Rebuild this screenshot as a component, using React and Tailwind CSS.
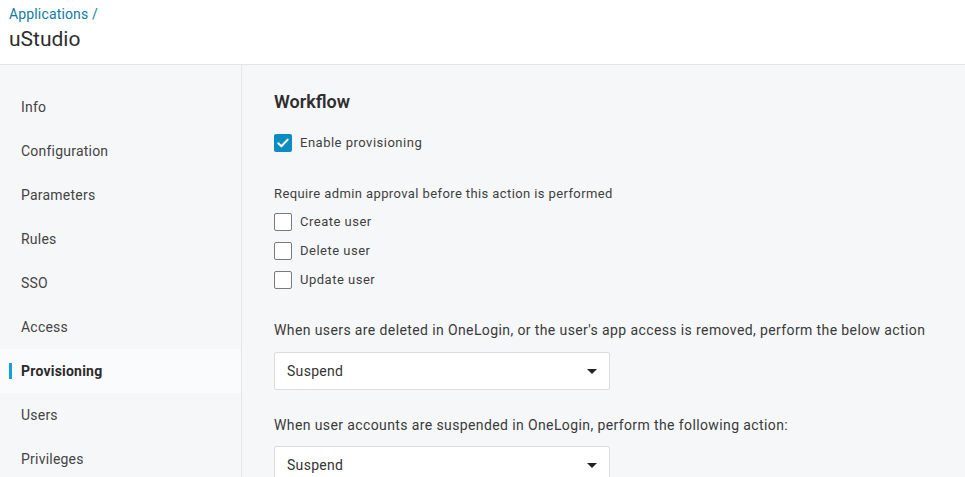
import React from "react";

const navItems = ["Info", "Configuration", "Parameters", "Rules", "SSO", "Access", "Provisioning", "Users", "Privileges"];

function Check({ checked, label }) {
  return (
    <label className="flex items-center gap-2 h-[18px]">
      {checked ? (
        <span className="w-[18px] h-[18px] rounded-[2px] bg-[#0c8dc2] flex items-center justify-center">
          <svg width="12" height="10" viewBox="0 0 12 10" fill="none">
            <path d="M1.3 5.2 L4.4 8.2 L10.7 1.6" stroke="white" strokeWidth="2" strokeLinecap="round" strokeLinejoin="round" />
          </svg>
        </span>
      ) : (
        <span className="w-[18px] h-[18px] rounded-[2px] border border-[#7a7a7a] bg-white" />
      )}
      <span className="text-[13px] tracking-[0.5px] text-[#3f3f3f]">{label}</span>
    </label>
  );
}

function Select({ value }) {
  return (
    <div className="w-[336px] h-[38px] bg-white border border-[#dcdcdc] rounded-[2px] flex items-center justify-between pl-[12px] pr-[12px]">
      <span className="text-[14px] tracking-[0.3px] text-[#333]">{value}</span>
      <svg width="10" height="5" viewBox="0 0 10 5">
        <path d="M0 0 L10 0 L5 5 Z" fill="#222" />
      </svg>
    </div>
  );
}

export default function App() {
  return (
    <div className="w-[965px] h-[477px] overflow-hidden bg-[#f6f7f9] flex flex-col" style={{ fontFamily: "Roboto, 'Liberation Sans', sans-serif" }}>
      <header className="h-[65px] shrink-0 bg-white border-b border-[#e3e4e6] pl-[9px] pt-[5px]">
        <div className="text-[14px] leading-[18px] tracking-[0.15px] text-[#0e7da3]">Applications /</div>
        <div className="text-[21px] leading-[30px] text-[#2e2e2e] mt-[1px]">uStudio</div>
      </header>
      <div className="flex flex-1 min-h-0">
        <nav className="w-[242px] shrink-0 border-r border-[#e6e7e9] pt-[20px] bg-[#f6f7f9]">
          {navItems.map((item) => {
            const active = item === "Provisioning";
            return (
              <div key={item} className={`relative h-[44px] flex items-center pl-[21px] text-[14px] tracking-[0.22px] ${active ? "bg-[#fafbfc] font-bold text-[#2b2b2b]" : "text-[#444]"}`}>
                {active && <span className="absolute left-[9px] top-[14px] w-[3px] h-[16px] bg-[#14a0d8]" />}
                {item}
              </div>
            );
          })}
        </nav>
        <main className="flex-1 pl-[32px] pt-[26px]">
          <h2 className="text-[18px] leading-[22px] font-semibold text-[#2e2e2e]">Workflow</h2>
          <div className="mt-[21px]">
            <Check checked label="Enable provisioning" />
          </div>
          <p className="mt-[34px] text-[13px] leading-[16px] tracking-[0.4px] text-[#3f3f3f]">Require admin approval before this action is performed</p>
          <div className="mt-[11px] flex flex-col gap-[11px]">
            <Check label="Create user" />
            <Check label="Delete user" />
            <Check label="Update user" />
          </div>
          <p className="mt-[32px] text-[14px] leading-[18px] tracking-[0.39px] text-[#3a3a3a]">When users are deleted in OneLogin, or the user's app access is removed, perform the below action</p>
          <div className="mt-[13px]">
            <Select value="Suspend" />
          </div>
          <p className="mt-[26px] text-[14px] leading-[18px] tracking-[0.39px] text-[#3a3a3a]">When user accounts are suspended in OneLogin, perform the following action:</p>
          <div className="mt-[12px]">
            <Select value="Suspend" />
          </div>
        </main>
      </div>
    </div>
  );
}
